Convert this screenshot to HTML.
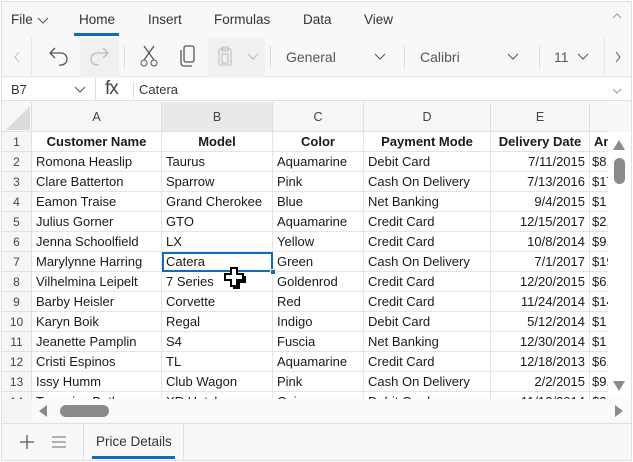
<!DOCTYPE html>
<html><head><style>
*{margin:0;padding:0;box-sizing:border-box}
body{width:633px;height:462px;overflow:hidden;background:#fff;font-family:"Liberation Sans",sans-serif;color:#222;position:relative}
.a{position:absolute}
.frame{left:1px;top:1px;width:631px;height:460px;border:1px solid #e0e0e0;background:#f8f8f8}
.tab{top:12px;font-size:13.5px;color:#333}
.tb{top:49px;font-size:14px;color:#555}
.sep{width:1px;background:#ddd}
.grid{left:2px;top:102px;width:606px;height:297px;overflow:hidden;background:#fff}
.cell{position:absolute;height:20px;line-height:19px;font-size:13px;white-space:nowrap;overflow:hidden;padding:0 4px;border-right:1px solid #e4e4e4;border-bottom:1px solid #e4e4e4;color:#1a1a1a}
.hd{position:absolute;background:#f6f6f6;color:#444;font-size:12.5px;text-align:center;border-right:1px solid #e0e0e0;border-bottom:1px solid #e0e0e0}
svg{position:absolute}
</style></head><body>
<div class="a frame"></div>
<div class="a tab" style="left:11px">File</div>
<svg style="left:37px;top:17px" width="12" height="8"><path d="M1 1l5 5 5-5" stroke="#555" fill="none"/></svg>
<div class="a tab" style="left:79px">Home</div>
<div class="a" style="left:74px;top:33px;width:45px;height:3px;background:#0f6cbd"></div>
<div class="a tab" style="left:148px">Insert</div>
<div class="a tab" style="left:214px">Formulas</div>
<div class="a tab" style="left:303px">Data</div>
<div class="a tab" style="left:364px">View</div>
<svg style="left:612px;top:13px" width="10" height="6"><path d="M1 5l4-4 4 4" stroke="#999" fill="none"/></svg>
<!-- toolbar -->
<div class="a" style="left:2px;top:38px;width:629px;height:39px;background:#f8f8f8;border-bottom:1px solid #e6e6e6"></div>
<svg style="left:13px;top:51px" width="8" height="12"><path d="M6 1L2 6l4 5" stroke="#bbb" fill="none"/></svg>
<div class="a sep" style="left:31px;top:38px;height:39px;background:#e6e6e6"></div>
<div class="a" style="left:80px;top:38px;width:39px;height:39px;background:#f0f0f0"></div>
<svg style="left:48px;top:47px" width="24" height="20"><path d="M7 1L2 6l5 5M2 6h11a6 6 0 010 12h-2" stroke="#555" fill="none" stroke-width="1.3"/></svg>
<svg style="left:88px;top:47px" width="24" height="20"><path d="M15 1l5 5-5 5M20 6H9a6 6 0 000 12h2" stroke="#bbb" fill="none" stroke-width="1.3"/></svg>
<div class="a sep" style="left:124px;top:46px;height:22px"></div>
<svg style="left:139px;top:45px" width="22" height="24"><path d="M5 1l10 14M15 1L5 15" stroke="#555" fill="none" stroke-width="1.3"/><circle cx="5" cy="18" r="3" stroke="#555" fill="none"/><circle cx="15" cy="18" r="3" stroke="#555" fill="none"/></svg>
<svg style="left:178px;top:45px" width="22" height="24"><rect x="6" y="1" width="10" height="16" rx="2" stroke="#555" fill="none" stroke-width="1.3"/><path d="M3 5v13a3 3 0 003 3h8" stroke="#555" fill="none" stroke-width="1.3"/></svg>
<div class="a" style="left:208px;top:38px;width:57px;height:39px;background:#f0f0f0"></div>
<svg style="left:216px;top:46px" width="20" height="22"><rect x="3" y="3" width="12" height="16" rx="1" stroke="#bbb" fill="none"/><rect x="6" y="8" width="6" height="9" stroke="#bbb" fill="none"/><rect x="6" y="1" width="6" height="4" stroke="#bbb" fill="none"/></svg>
<svg style="left:247px;top:53px" width="12" height="8"><path d="M1 1l5 5 5-5" stroke="#bbb" fill="none"/></svg>
<div class="a sep" style="left:270px;top:46px;height:22px"></div>
<div class="a tb" style="left:286px">General</div>
<svg style="left:374px;top:53px" width="12" height="8"><path d="M1 1l5 5 5-5" stroke="#555" fill="none"/></svg>
<div class="a sep" style="left:404px;top:46px;height:22px"></div>
<div class="a tb" style="left:420px">Calibri</div>
<svg style="left:507px;top:53px" width="12" height="8"><path d="M1 1l5 5 5-5" stroke="#555" fill="none"/></svg>
<div class="a sep" style="left:539px;top:46px;height:22px"></div>
<div class="a tb" style="left:554px">11</div>
<svg style="left:577px;top:53px" width="12" height="8"><path d="M1 1l5 5 5-5" stroke="#555" fill="none"/></svg>
<div class="a sep" style="left:604px;top:38px;height:39px;background:#e6e6e6"></div>
<svg style="left:614px;top:51px" width="8" height="12"><path d="M2 1l4 5-4 5" stroke="#555" fill="none"/></svg>
<!-- formula bar -->
<div class="a" style="left:2px;top:78px;width:629px;height:23px;background:#fff;border-bottom:1px solid #e0e0e0"></div>
<div class="a" style="left:11px;top:82px;font-size:13px;color:#333">B7</div>
<svg style="left:74px;top:86px" width="12" height="8"><path d="M1 1l5 5 5-5" stroke="#555" fill="none"/></svg>
<div class="a sep" style="left:95px;top:78px;height:23px;background:#e0e0e0"></div>
<div class="a" style="left:105px;top:78px;font-size:19px;color:#444;letter-spacing:-1px">fx</div>
<div class="a sep" style="left:133px;top:82px;height:16px"></div>
<div class="a" style="left:139px;top:82px;font-size:13px;color:#333">Catera</div>
<svg style="left:612px;top:88px" width="10" height="6"><path d="M1 1l4 4 4-4" stroke="#999" fill="none"/></svg>
<!-- grid -->
<div class="a grid">
<div class="hd" style="left:0;top:0;width:30px;height:30px"></div>
<svg style="left:4px;top:4px" width="24" height="24"><path d="M24 0V24H0z" fill="#dcdcdc"/></svg>
<div class="hd" style="left:30px;top:0;width:130px;height:30px;line-height:30px">A</div>
<div class="hd" style="left:160px;top:0;width:111px;height:30px;line-height:30px;background:#e9e9e9">B</div>
<div class="hd" style="left:271px;top:0;width:91px;height:30px;line-height:30px">C</div>
<div class="hd" style="left:362px;top:0;width:127px;height:30px;line-height:30px">D</div>
<div class="hd" style="left:489px;top:0;width:99px;height:30px;line-height:30px">E</div>
<div class="hd" style="left:588px;top:0;width:30px;height:30px"></div>
<div id="rows"></div>
</div>
<script>
var d=[["Customer Name","Model","Color","Payment Mode","Delivery Date","Am"],
["Romona Heaslip","Taurus","Aquamarine","Debit Card","7/11/2015","$8,"],
["Clare Batterton","Sparrow","Pink","Cash On Delivery","7/13/2016","$17"],
["Eamon Traise","Grand Cherokee","Blue","Net Banking","9/4/2015","$1"],
["Julius Gorner","GTO","Aquamarine","Credit Card","12/15/2017","$2,"],
["Jenna Schoolfield","LX","Yellow","Credit Card","10/8/2014","$9,"],
["Marylynne Harring","Catera","Green","Cash On Delivery","7/1/2017","$19"],
["Vilhelmina Leipelt","7 Series","Goldenrod","Credit Card","12/20/2015","$6,"],
["Barby Heisler","Corvette","Red","Credit Card","11/24/2014","$14"],
["Karyn Boik","Regal","Indigo","Debit Card","5/12/2014","$1"],
["Jeanette Pamplin","S4","Fuscia","Net Banking","12/30/2014","$1"],
["Cristi Espinos","TL","Aquamarine","Credit Card","12/18/2013","$6,"],
["Issy Humm","Club Wagon","Pink","Cash On Delivery","2/2/2015","$9,"],
["Tamarius Beth","XR Hatch","Coin","Debit Card","11/13/2014","$2,"]];
var L=[30,160,271,362,489,588],W=[130,111,91,127,99,30],h="";
for(var r=0;r<d.length;r++){var t=30+r*20;
h+='<div class="hd" style="left:0;top:'+t+'px;width:30px;height:20px;line-height:20px;font-size:12px">'+(r+1)+'</div>';
for(var c=0;c<6;c++){var s='left:'+L[c]+'px;top:'+t+'px;width:'+W[c]+'px;';
if(r==0){s+='font-weight:bold;text-align:center;padding:0 2px;';}
else if(c==4)s+='text-align:right;';
if(c==5)s+='padding:0 2px;';
h+='<div class="cell" style="'+s+'">'+d[r][c]+'</div>';}}
document.getElementById('rows').innerHTML=h;
</script>
<div class="a" style="left:162px;top:252px;width:111px;height:20px;border:2px solid #0f6cbd"></div>
<div class="a" style="left:270px;top:269px;width:6px;height:6px;background:#0f6cbd;border:1px solid #fff"></div>
<svg style="left:224px;top:267px" width="24" height="24"><path d="M7 1h6v6h6v6h-6v6H7v-6H1V7h6z" fill="#fff" stroke="#000" stroke-width="2"/><path d="M21 9v6h-6v6H9" stroke="#000" stroke-width="2" fill="none"/></svg>
<div class="a" style="left:608px;top:132px;width:23px;height:267px;background:#fff"></div>
<svg style="left:612px;top:139px" width="14" height="12"><path d="M7 1l6 10H1z" fill="#8a8a8a"/></svg>
<div class="a" style="left:614px;top:158px;width:11px;height:26px;border-radius:6px;background:#8a8a8a"></div>
<svg style="left:612px;top:380px" width="14" height="12"><path d="M1 1h12L7 11z" fill="#8a8a8a"/></svg>
<div class="a" style="left:2px;top:399px;width:629px;height:23px;background:#fafafa"></div>
<div class="a" style="left:2px;top:399px;width:30px;height:23px;background:#f4f4f4"></div>
<svg style="left:38px;top:404px" width="10" height="14"><path d="M9 1v12L1 7z" fill="#8a8a8a"/></svg>
<div class="a" style="left:60px;top:405px;width:49px;height:12px;border-radius:6px;background:#8a8a8a"></div>
<svg style="left:614px;top:404px" width="10" height="14"><path d="M1 1v12l8-6z" fill="#8a8a8a"/></svg>
<div class="a" style="left:2px;top:423px;width:629px;height:37px;background:#f8f8f8;border-top:1px solid #e0e0e0"></div>
<svg style="left:19px;top:434px" width="16" height="16"><path d="M8 1v14M1 8h14" stroke="#555" stroke-width="1.3"/></svg>
<svg style="left:51px;top:435px" width="16" height="14"><path d="M1 2h14M1 7h14M1 12h14" stroke="#888" stroke-width="1.3"/></svg>
<div class="a sep" style="left:83px;top:424px;height:36px;background:#e0e0e0"></div>
<div class="a sep" style="left:183px;top:424px;height:36px;background:#e0e0e0"></div>
<div class="a" style="left:96px;top:434px;font-size:13.5px;color:#333">Price Details</div>
<div class="a" style="left:92px;top:456px;width:83px;height:3px;background:#0f6cbd"></div>
</body></html>
